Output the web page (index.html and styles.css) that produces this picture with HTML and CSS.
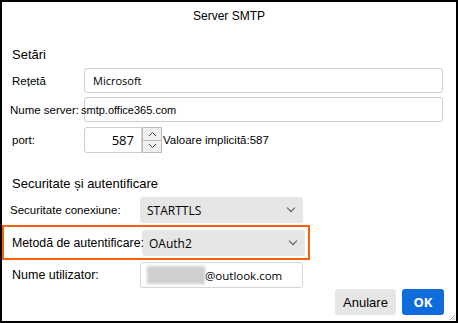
FILE: index.html
```html
<!DOCTYPE html>
<html lang="ro">
<head>
    <meta charset="UTF-8">
    <meta name="viewport" content="width=device-width, initial-scale=1.0">
    <title>Server SMTP</title>
    <link rel="stylesheet" href="styles.css">
</head>
<body>

<div class="dialog">
    <div class="dialog-title">Server SMTP</div>

    <div class="content">
        <div class="section-title first">Setări</div>

        <div class="row row-input">
            <span class="label short pad">Rețetă</span>
            <div class="field wide"><span class="value segoe">Microsoft</span></div>
        </div>

        <div class="row row-input">
            <span class="label short">Nume server:</span>
            <div class="field wide"><span class="value overlap">smtp.office365.com</span></div>
        </div>

        <div class="row row-port">
            <span class="label short pad">port:</span>
            <div class="field port-field"><span class="value">587</span></div>
            <div class="spinner">
                <div class="spin-btn">
                    <svg width="9" height="6" viewBox="0 0 9 6"><path d="M1 5 L4.5 1.5 L8 5" fill="none" stroke="#444" stroke-width="1"/></svg>
                </div>
                <div class="spin-btn">
                    <svg width="9" height="6" viewBox="0 0 9 6"><path d="M1 1 L4.5 4.5 L8 1" fill="none" stroke="#444" stroke-width="1"/></svg>
                </div>
            </div>
            <span class="hint">Valoare implicită:587</span>
        </div>

        <div class="section-title second">Securitate și autentificare</div>

        <div class="row row-select">
            <span class="label long">Securitate conexiune:</span>
            <div class="select"><span class="select-text">STARTTLS</span><span class="chevron"></span></div>
        </div>

        <div class="highlight">
            <span class="label long method">Metodă de autentificare:</span>
            <div class="select"><span class="select-text">OAuth2</span><span class="chevron"></span></div>
        </div>

        <div class="row row-user">
            <span class="label long big pad">Nume utilizator:</span>
            <div class="field user-field">
                <span class="blurred"></span>
                <span class="value segoe user">@outlook.com</span>
            </div>
        </div>

        <div class="buttons">
            <button class="btn">Anulare</button>
            <button class="btn primary">OK</button>
        </div>
    </div>

    <svg class="grip" width="7" height="7" viewBox="0 0 7 7">
        <path d="M6 1 L1 6 M6 3.5 L3.5 6 M6 5.5 L5.5 6" stroke="#aaa" stroke-width="1"/>
    </svg>
</div>

</body>
</html>
```

FILE: styles.css
```css
* {
    box-sizing: border-box;
}
body {
    margin: 0;
    background-color: #ffffff;
    font-family: "Liberation Sans", Arial, sans-serif;
    font-size: 11.5px;
    color: #000;
}
.dialog {
    position: relative;
    width: 458px;
    height: 323px;
    border: 2px solid #000;
    background-color: #fff;
}
.dialog-title {
    height: 28px;
    line-height: 28px;
    text-align: center;
    font-size: 12px;
}
.content {
    padding: 0 13px 0 8px;
}
.section-title {
    height: 20px;
    line-height: 20px;
    font-size: 13px;
    padding-left: 2px;
}
.section-title.first { margin-top: 15px; }
.section-title.second { margin-top: 21px; }

.row {
    display: flex;
    align-items: center;
}
.row-input { height: 25px; margin-top: 3px; }
.row-input + .row-input { margin-top: 4px; }
.row-port { height: 26px; margin-top: 5px; }
.row-select { height: 26px; margin-top: 3px; }
.row-user { height: 26px; margin-top: 2px; }

.label {
    position: relative;
    z-index: 1;
    flex-shrink: 0;
    white-space: nowrap;
}
.label.pad { padding-left: 2px; }
.label.short { width: 74px; }
.label.long { width: 130px; }
.label.big { font-size: 12.5px; }
.label.method { font-size: 12.3px; }

.field {
    height: 100%;
    display: flex;
    align-items: center;
    border: 1px solid #cfcfcf;
    border-radius: 3px;
    background-color: #fff;
}
.field.wide {
    flex: 1;
    padding-left: 8px;
}
.value {
    white-space: nowrap;
}
.value.segoe {
    font-family: "Open Sans", "Noto Sans", sans-serif;
    font-size: 11px;
}
.value.user {
    font-size: 11.5px;
}
.value.overlap {
    font-size: 11px;
    margin-left: -12px;
}

.port-field {
    width: 58px;
    justify-content: flex-end;
    padding-right: 7px;
    border-radius: 3px 0 0 3px;
}
.port-field .value {
    font-family: "Open Sans", "Noto Sans", sans-serif;
    font-size: 13px;
}
.spinner {
    width: 20px;
    height: 100%;
    display: flex;
    flex-direction: column;
}
.spin-btn {
    flex: 1;
    display: flex;
    align-items: center;
    justify-content: center;
    background-color: #f0f0f0;
    border: 1px solid #bdbdbd;
}
.spin-btn + .spin-btn { border-top: none; }
.hint {
    margin-left: 1px;
    white-space: nowrap;
}

.select {
    width: 163px;
    height: 26px;
    display: flex;
    align-items: center;
    justify-content: space-between;
    padding: 0 9px 0 7px;
    background-color: #e6e6e6;
    border-radius: 3px;
}
.select-text {
    font-family: "Open Sans", "Noto Sans", sans-serif;
    font-size: 12px;
}
.chevron {
    width: 6px;
    height: 6px;
    border-right: 1px solid #555;
    border-bottom: 1px solid #555;
    transform: rotate(45deg);
    margin-top: -4px;
}

.highlight {
    display: flex;
    align-items: center;
    width: 308px;
    height: 35px;
    margin: 2px 0 0 -8px;
    padding: 1px 0 0 8px;
    border: 2px solid #f7630c;
}

.user-field {
    width: 163px;
    padding-left: 6px;
    border-color: #d6d6d6;
}
.blurred {
    width: 58px;
    height: 18px;
    background-color: #cfcfcf;
    filter: blur(1.5px);
}

.buttons {
    display: flex;
    justify-content: flex-end;
    gap: 6px;
    margin-top: 1px;
    margin-right: -1px;
}
.btn {
    height: 26px;
    border: none;
    border-radius: 3px;
    font-family: "Liberation Sans", Arial, sans-serif;
    font-size: 13px;
    cursor: pointer;
}
.btn {
    width: 61px;
    background-color: #e6e6e6;
    color: #000;
}
.btn.primary {
    width: 42px;
    background-color: #0f6cdb;
    color: #fff;
    font-family: "Open Sans", "Noto Sans", sans-serif;
    font-weight: bold;
    font-size: 13px;
}
.grip {
    position: absolute;
    right: 0;
    bottom: 0;
}
```
